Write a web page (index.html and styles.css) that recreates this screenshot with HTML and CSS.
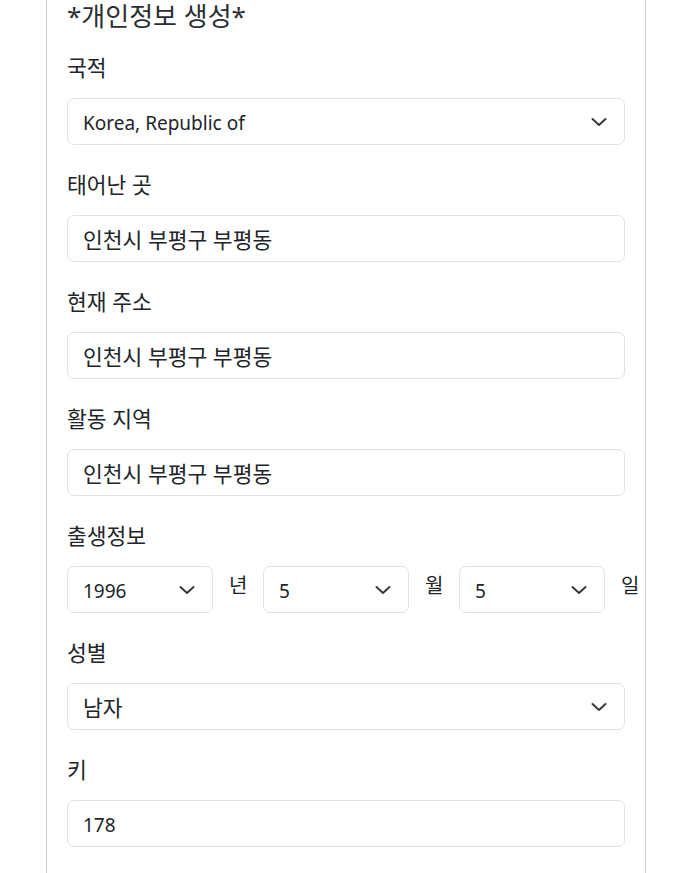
FILE: index.html
```html
<!DOCTYPE html>
<html lang="ko">
<head>
<meta charset="utf-8">
<link rel="stylesheet" href="styles.css">
</head>
<body>
<div class="panel">
  <h4 class="title">*개인정보 생성*</h4>

  <div class="group">
    <div class="label">국적</div>
    <div class="control select">
      <span class="value">Korea, Republic of</span>
      <svg class="chev" width="16" height="10" viewBox="0 0 16 10"><path d="M1.5 2 L8 8 L14.5 2" fill="none" stroke="#343a40" stroke-width="2" stroke-linecap="round" stroke-linejoin="round"/></svg>
    </div>
  </div>

  <div class="group">
    <div class="label">태어난 곳</div>
    <div class="control"><span class="value ko">인천시 부평구 부평동</span></div>
  </div>

  <div class="group">
    <div class="label">현재 주소</div>
    <div class="control"><span class="value ko">인천시 부평구 부평동</span></div>
  </div>

  <div class="group">
    <div class="label">활동 지역</div>
    <div class="control"><span class="value ko">인천시 부평구 부평동</span></div>
  </div>

  <div class="group">
    <div class="label">출생정보</div>
    <div class="birth">
      <div class="control select small">
        <span class="value">1996</span>
        <svg class="chev" width="16" height="10" viewBox="0 0 16 10"><path d="M1.5 2 L8 8 L14.5 2" fill="none" stroke="#343a40" stroke-width="2" stroke-linecap="round" stroke-linejoin="round"/></svg>
      </div>
      <span class="unit">년</span>
      <div class="control select small">
        <span class="value">5</span>
        <svg class="chev" width="16" height="10" viewBox="0 0 16 10"><path d="M1.5 2 L8 8 L14.5 2" fill="none" stroke="#343a40" stroke-width="2" stroke-linecap="round" stroke-linejoin="round"/></svg>
      </div>
      <span class="unit">월</span>
      <div class="control select small">
        <span class="value">5</span>
        <svg class="chev" width="16" height="10" viewBox="0 0 16 10"><path d="M1.5 2 L8 8 L14.5 2" fill="none" stroke="#343a40" stroke-width="2" stroke-linecap="round" stroke-linejoin="round"/></svg>
      </div>
      <span class="unit">일</span>
    </div>
  </div>

  <div class="group">
    <div class="label">성별</div>
    <div class="control select">
      <span class="value ko">남자</span>
      <svg class="chev" width="16" height="10" viewBox="0 0 16 10"><path d="M1.5 2 L8 8 L14.5 2" fill="none" stroke="#343a40" stroke-width="2" stroke-linecap="round" stroke-linejoin="round"/></svg>
    </div>
  </div>

  <div class="group">
    <div class="label">키</div>
    <div class="control"><span class="value">178</span></div>
  </div>
</div>
</body>
</html>
```

FILE: styles.css
```css
html, body {
  margin: 0;
  padding: 0;
  background: #fff;
}

body {
  font-family: "Noto Sans", "Noto Sans CJK KR", sans-serif;
  color: #212529;
  overflow: hidden;
  height: 873px;
}

.panel {
  width: 558px;
  margin-left: 46px;
  padding: 0 20px 40px;
  border-left: 1px solid #cfcfcf;
  border-right: 1px solid #cfcfcf;
  min-height: 873px;
}

.title {
  margin: 0 0 21px;
  font-size: 26px;
  line-height: 32px;
  font-weight: 400;
  color: #2b2f33;
}

.group {
  margin-bottom: 25px;
}

.label {
  font-size: 21.5px;
  line-height: 30px;
  margin-bottom: 15px;
}

.control {
  box-sizing: border-box;
  height: 47px;
  border: 1px solid #dee2e6;
  border-radius: 7px;
  padding: 0 18px 0 15px;
  display: flex;
  align-items: center;
  justify-content: space-between;
  background: #fff;
}

.value {
  font-size: 19px;
  line-height: 28px;
  padding-top: 2px;
}

.value.ko {
  font-size: 21.5px;
}

.chev {
  flex: none;
  display: block;
  margin-right: -1px;
}

.birth {
  display: flex;
  align-items: flex-start;
  gap: 16px;
}

.small {
  flex: none;
  width: 146px;
}

.unit {
  flex: none;
  width: 18px;
  font-size: 20px;
  line-height: 30px;
  padding-top: 5px;
  text-align: center;
}
```
